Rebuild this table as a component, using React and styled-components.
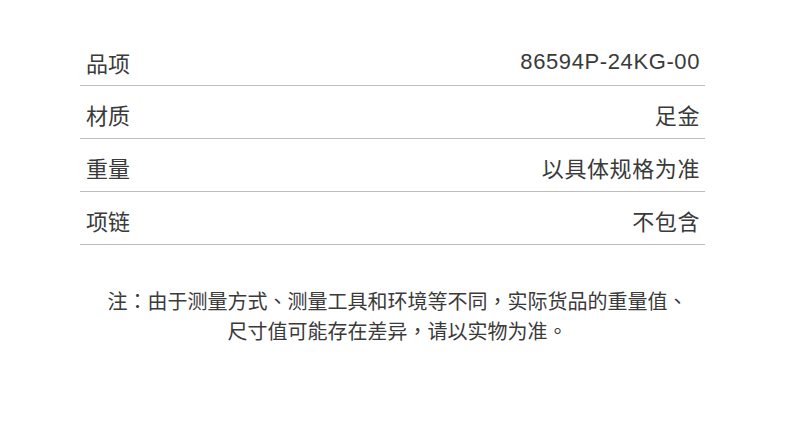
import React from "react";
import styled, { createGlobalStyle } from "styled-components";

const rows = [
  { label: "品项", value: "86594P-24KG-00" },
  { label: "材质", value: "足金" },
  { label: "重量", value: "以具体规格为准" },
  { label: "项链", value: "不包含" },
];

export default function App() {
  return (
    <>
      <Global />
      <Page>
        <Table>
          {rows.map((row) => (
            <Row key={row.label}>
              <Label>{row.label}</Label>
              <Value>{row.value}</Value>
            </Row>
          ))}
        </Table>
        <Note>
          注：由于测量方式、测量工具和环境等不同，实际货品的重量值、
          <br />
          尺寸值可能存在差异，请以实物为准。
        </Note>
      </Page>
    </>
  );
}

const Global = createGlobalStyle`
  body {
    margin: 0;
    background: #ffffff;
    font-family: "Liberation Sans", "Noto Sans CJK TC", sans-serif;
  }
`;

const Page = styled.div`
  width: 625px;
  margin: 0 0 0 80px;
  padding-top: 34px;
`;

const Table = styled.div`
  display: flex;
  flex-direction: column;
`;

const Row = styled.div`
  display: flex;
  align-items: center;
  justify-content: space-between;
  height: 52px;
  padding: 4px 5px 0 6px;
  box-sizing: border-box;
  border-bottom: 1px solid #bdbdbd;
  font-size: 22px;
  color: #3a3a3a;
  & + & {
    height: 53px;
  }
`;

const Label = styled.span``;

const Value = styled.span`
  letter-spacing: 0.6px;
`;

const Note = styled.p`
  margin: 42px 0 0;
  padding-left: 10px;
  text-align: center;
  font-size: 20px;
  line-height: 30px;
  color: #3a3a3a;
`;
